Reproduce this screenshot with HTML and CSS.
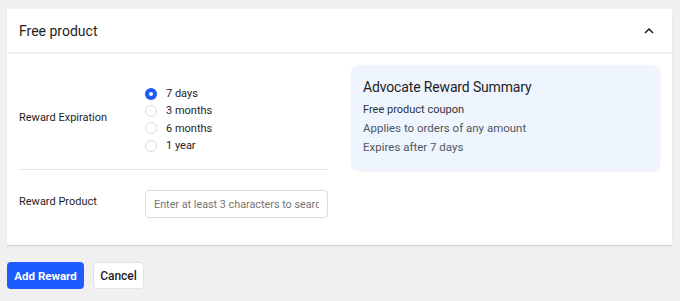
FILE: index.html
```html
<!DOCTYPE html>
<html>
<head>
<meta charset="utf-8">
<link rel="stylesheet" href="styles.css">
</head>
<body>
<div class="page">
  <div class="card">
    <div class="card-header">
      <span class="card-title">Free product</span>
      <svg class="chevron" width="12" height="8" viewBox="0 0 12 8"><path d="M2 6 L6 2 L10 6" fill="none" stroke="#1e1e1e" stroke-width="1.5"/></svg>
    </div>
    <div class="card-body">
      <div class="form">
        <div class="field field-expiration">
          <div class="label label-mid">Reward Expiration</div>
          <div class="radios">
            <label class="radio"><span class="dot checked"></span>7 days</label>
            <label class="radio"><span class="dot"></span>3 months</label>
            <label class="radio"><span class="dot"></span>6 months</label>
            <label class="radio"><span class="dot"></span>1 year</label>
          </div>
        </div>
        <div class="field field-product">
          <div class="label label-top">Reward Product</div>
          <input class="search" type="text" placeholder="Enter at least 3 characters to search">
        </div>
      </div>
      <div class="summary">
        <div class="summary-title">Advocate Reward Summary</div>
        <div class="summary-line small">Free product coupon</div>
        <div class="summary-line">Applies to orders of any amount</div>
        <div class="summary-line">Expires after 7 days</div>
      </div>
    </div>
  </div>
  <div class="actions">
    <button class="btn btn-primary">Add Reward</button>
    <button class="btn btn-secondary">Cancel</button>
  </div>
</div>
</body>
</html>
```
FILE: styles.css
```css
* { box-sizing: border-box; }
html, body { margin: 0; padding: 0; }
body {
  background: #f0f0f0;
  font-family: Roboto, "Liberation Sans", sans-serif;
  color: #1e1e1e;
}
.page { padding: 9px 8px 0 7px; }
.card {
  background: #fff;
  box-shadow: 0 1px 1px rgba(0,0,0,0.12);
}
.card-header {
  height: 45px;
  padding: 0 17px 0 12px;
  display: flex;
  align-items: center;
  justify-content: space-between;
  border-bottom: 2px solid #f1f1f1;
}
.card-title { font-size: 14px; padding-top: 1px; }
.chevron { display: block; }
.card-body {
  display: grid;
  grid-template-columns: 309px 309px;
  column-gap: 23px;
  padding: 11px 12px 27px;
  align-items: start;
}
.field { display: flex; }
.field-expiration {
  align-items: center;
  padding: 20px 0 15px;
  border-bottom: 1px solid #e6e6e6;
}
.field-product { padding-top: 20px; align-items: flex-start; }
.label { width: 126px; font-size: 11px; line-height: 16px; }
.label-mid { padding-bottom: 4px; }
.label-top { padding-top: 4px; }
.radios { display: flex; flex-direction: column; }
.radio {
  display: flex;
  align-items: center;
  height: 17.33px;
  font-size: 11px;
  gap: 9px;
}
.dot {
  width: 12px; height: 12px;
  border-radius: 50%;
  border: 1px solid #dcdcdc;
  background: #fff;
  flex: none;
}
.dot.checked {
  border: none;
  background: #1e5bff;
  position: relative;
}
.dot.checked::after {
  content: "";
  position: absolute;
  left: 4px; top: 4px;
  width: 4px; height: 4px;
  border-radius: 50%;
  background: #fff;
}
.search {
  width: 183px;
  height: 28px;
  border: 1px solid #dcdcdc;
  border-radius: 4px;
  padding: 0 8px;
  font-family: inherit;
  font-size: 10.8px;
  outline: none;
}
.search::placeholder { color: #757575; }
.summary {
  background: #eef5ff;
  border-radius: 7px;
  box-shadow: 0 1px 2px rgba(0,0,0,0.08);
  padding: 12px 12px 13px;
}
.summary-title { font-size: 14px; letter-spacing: -0.15px; line-height: 20px; margin-bottom: 3px; padding-top: 0; }
.summary-line { font-size: 11.5px; line-height: 19px; color: #50575e; }
.summary-line.small { font-size: 11px; color: #2f3337; }
.actions {
  display: flex;
  gap: 9px;
  margin-top: 17px;
}
.btn {
  height: 27px;
  border-radius: 4px;
  font-family: inherit;
  font-size: 12px;
  cursor: pointer;
  padding: 0;
}
.btn-primary {
  width: 77px;
  background: #1e5bff;
  color: #fff;
  border: none;
  font-weight: 700;
  font-size: 11.5px;
}
.btn-secondary {
  width: 51px;
  background: #fff;
  color: #1e1e1e;
  border: 1px solid #e2e2e2;
  font-weight: 500;
}
```
